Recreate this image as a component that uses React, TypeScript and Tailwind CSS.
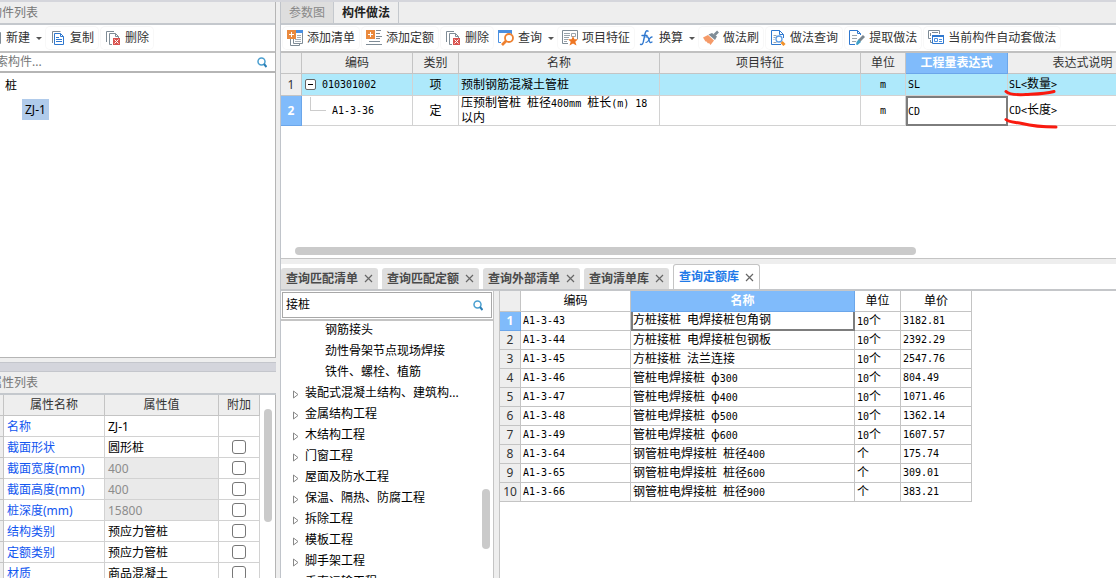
import React, { useState } from 'react';

type IconProps = { className?: string };

const NewIcon = () => (
  <svg width="16" height="16" viewBox="0 0 16 16" fill="none">
    <path d="M1.500 2.500h13v11h-13z" stroke="#7f8c96" />
    <path d="M8 5v6M5 8h6" stroke="#2f78cf" />
  </svg>
);

const AddListIcon = () => (
  <svg width="16" height="16" viewBox="0 0 16 16" fill="none">
    <path d="M3.500 9v6.500h9V14M6.500 9v4.500h9V1" stroke="#7f8c96" />
    <path d="M9 0h7v3H9z" fill="#4a90e2" />
    <path d="M10 5.500h4M10 7.500h4M8 9.500h6M8 11.500h6" stroke="#a5aeb5" />
    <path d="M0 0h9v9H0z" fill="#ea8a3e" />
    <path d="M4.500 2v5M2 4.500h5" stroke="#fff" />
  </svg>
);

const AddQuotaIcon = () => (
  <svg width="16" height="16" viewBox="0 0 16 16" fill="none">
    <path d="M10 .500h5M10 3.500h4M10 6.500h6M10 8.500h4M3 11.500h11M0 14.500h16" stroke="#7f8c96" />
    <path d="M0 0h9v9H0z" fill="#ea8a3e" />
    <path d="M4.500 2v5M2 4.500h5" stroke="#fff" />
  </svg>
);

const CopyIcon = () => (
  <svg width="16" height="16" viewBox="0 0 16 16" fill="none">
    <path d="M2.500 13V1.500h8" stroke="#7f8c96" />
    <path d="M4.500 3.500h6l3 3v8h-9zM10.500 3.500v3h3" stroke="#2f78cf" />
    <path d="M6 7.500h3M6 9.500h6M6 11.500h6" stroke="#2f78cf" />
  </svg>
);

const DeleteIcon = () => (
  <svg width="16" height="16" viewBox="0 0 16 16" fill="none">
    <path d="M1.500 12V1.500H9" stroke="#7f8c96" />
    <path d="M7 14.500H4.500v-11h6l3 3V8M10.500 3.500v3h3" stroke="#7f8c96" />
    <path d="M8 8h7v7H8z" fill="#d9534f" />
    <path d="M9.500 9.500l4 4M13.500 9.500l-4 4" stroke="#fff" />
  </svg>
);

const QueryIcon = () => (
  <svg width="16" height="16" viewBox="0 0 16 16" fill="none">
    <path d="M.500 2v10.500H3M13.500 2v2" stroke="#4a90e2" />
    <path d="M0 0h14v3H0z" fill="#4a8fe0" />
    <circle cx="11" cy="8" r="4" stroke="#ee8130" strokeWidth="1.800" />
    <path d="M8 11L4 15" stroke="#ee8130" strokeWidth="2.600" />
  </svg>
);

const FeatureIcon = () => (
  <svg width="16" height="16" viewBox="0 0 16 16" fill="none">
    <path d="M6 13.500H.500v-13h15V9" stroke="#7f8c96" />
    <path d="M2 3.500h6M2 5.500h6M2 7.500h5M2 9.500h4M2 11.500h3M9.500 3.500h4v3h-4z" stroke="#9aa4ac" />
    <path d="M11 6l1.400 3.200 3.600.1-2.700 2.500 1.200 3.700-3.500-1.900-3.500 1.900 1.200-3.700L6 9.300l3.600-.1z" fill="#ee7623" />
  </svg>
);

const FxIcon = () => (
  <svg width="16" height="16" viewBox="0 0 16 16" fill="none" stroke="#2f78cf" strokeLinecap="round">
    <path d="M9 1.200C7.500.200 6.500 1.200 6 4L4.500 11c-.5 3-1.500 4-3 3.300M3 5.500h5" strokeWidth="1.400" />
    <path d="M7 7c2-.8 2.300.5 3 3s1.200 3.200 3 2M13 7c-2-.2-2.500 2-3.500 3.500s-1.500 2-2.500 1.800" strokeWidth="1.300" />
  </svg>
);

const BrushIcon = () => (
  <svg width="16" height="16" viewBox="0 0 16 16" fill="none">
    <path d="M11.500 5L15 1.500" stroke="#7f8c96" strokeWidth="2.600" />
    <path d="M5.500 4.500l6.500 5.500 2-3.500L9 3z" fill="#7f8c96" />
    <path d="M0 7.500L5 5l6 5.500L7.500 15 6 13l-1 .500-1.500-2-1 0z" fill="#f59a68" />
  </svg>
);

const FileSearchIcon = () => (
  <svg width="16" height="16" viewBox="0 0 16 16" fill="none">
    <path d="M11 14.500H1.500V.500h8l4 4V8M9.500.500v4h4" stroke="#2f78cf" />
    <path d="M3.500 5.500h3M3.500 7.500h2M3.500 9.500h1M3.500 12.500h3" stroke="#9aa4ac" />
    <circle cx="9" cy="9" r="3" stroke="#5b9be3" strokeWidth="1.300" />
    <path d="M11.500 12l3 3" stroke="#f0912b" strokeWidth="3" />
  </svg>
);

const ExtractIcon = () => (
  <svg width="16" height="16" viewBox="0 0 16 16" fill="none">
    <path d="M6 14.500H.500v-14h8l3 3V5M8.500.500v3h3" stroke="#2f78cf" />
    <path d="M3 5.500h5M3 8.500h5M3 11.500h4" stroke="#9aa4ac" />
    <path d="M15 6L10 11" stroke="#7b868e" strokeWidth="3" />
    <path d="M9.500 9.500l2.500 2.500-3.500 3-1.500-.5.500-2.500z" fill="#3fa0c8" />
  </svg>
);

const AutoIcon = () => (
  <svg width="16" height="16" viewBox="0 0 16 16" fill="none">
    <path d="M3 8.500H.500v-8h11V4M2.500 3v3M4 2.500h6M2.500 10v2.500H4" stroke="#7f8c96" />
    <path d="M4.500 5.500h11v8h-11z" stroke="#2f78cf" />
    <path d="M4 5h12v2H4z" fill="#2f78cf" />
    <path d="M6.500 8.500h3v3h-3zM11 9.500h3M11 11.500h3" stroke="#4a90e2" />
  </svg>
);

const SearchIcon = ({ className }: IconProps) => (
  <svg className={className} width="10" height="11" viewBox="0 0 10 11" fill="none">
    <circle cx="4.500" cy="4.500" r="3.500" stroke="#4a9fd0" strokeWidth="1.500" />
    <path d="M7 7l2.500 3" stroke="#2b7fb5" strokeWidth="2" />
  </svg>
);

const CaretIcon = () => (
  <svg width="9" height="5" viewBox="0 0 9 5">
    <path d="M2 1h6L5 4z" fill="#555" />
  </svg>
);

const CloseIcon = () => (
  <svg width="9" height="9" viewBox="0 0 9 9" stroke="#666" strokeWidth="1.200">
    <path d="M1 1l7 7M8 1L1 8" />
  </svg>
);

// Grid text: Latin runs are set in a half-width mono face beside full-width glyphs
const Mono: React.FC<{ text: string }> = ({ text }) => (
  <>
    {text.split(/([\x20-\x7e]+)/).map((part, i) =>
      i % 2 ? (
        <span key={i} className="font-['DejaVu_Sans_Mono',monospace] text-[10px] whitespace-pre-wrap">{part}</span>
      ) : (
        part
      )
    )}
  </>
);

const ToolButton: React.FC<{ icon: React.ReactNode; label: string; menu?: boolean }> = ({ icon, label, menu }) => (
  <button
    type="button"
    className={`flex h-[22px] shrink-0 items-center gap-1 rounded-sm whitespace-nowrap text-[#333] hover:bg-gray-100 ${
      menu ? 'pl-0.5' : 'px-1 ring-1 ring-[#f8f8f8]'
    }`}
  >
    <span className="w-4 shrink-0">{icon}</span>
    {label}
    {menu && <CaretIcon />}
  </button>
);

const properties = [
  { name: '名称', value: 'ZJ-1', noCheck: true },
  { name: '截面形状', value: '圆形桩' },
  { name: '截面宽度(mm)', value: '400', locked: true },
  { name: '截面高度(mm)', value: '400', locked: true },
  { name: '桩深度(mm)', value: '15800', locked: true },
  { name: '结构类别', value: '预应力管桩' },
  { name: '定额类别', value: '预应力管桩' },
  { name: '材质', value: '商品混凝土' },
];

const queryTabs = ['查询匹配清单', '查询匹配定额', '查询外部清单', '查询清单库', '查询定额库'];

const chapters = [
  { label: '钢筋接头', leaf: true },
  { label: '劲性骨架节点现场焊接', leaf: true },
  { label: '铁件、螺栓、植筋', leaf: true },
  { label: '装配式混凝土结构、建筑构...' },
  { label: '金属结构工程' },
  { label: '木结构工程' },
  { label: '门窗工程' },
  { label: '屋面及防水工程' },
  { label: '保温、隔热、防腐工程' },
  { label: '拆除工程' },
  { label: '模板工程' },
  { label: '脚手架工程' },
  { label: '垂直运输工程' },
];

const quotas = [
  ['A1-3-43', '方桩接桩 电焊接桩包角钢', '10个', '3182.81'],
  ['A1-3-44', '方桩接桩 电焊接桩包钢板', '10个', '2392.29'],
  ['A1-3-45', '方桩接桩 法兰连接', '10个', '2547.76'],
  ['A1-3-46', '管桩电焊接桩 φ300', '10个', '804.49'],
  ['A1-3-47', '管桩电焊接桩 φ400', '10个', '1071.46'],
  ['A1-3-48', '管桩电焊接桩 φ500', '10个', '1362.14'],
  ['A1-3-49', '管桩电焊接桩 φ600', '10个', '1607.57'],
  ['A1-3-64', '钢管桩电焊接桩 桩径400', '个', '175.74'],
  ['A1-3-65', '钢管桩电焊接桩 桩径600', '个', '309.01'],
  ['A1-3-66', '钢管桩电焊接桩 桩径900', '个', '383.21'],
];

const PanelTitle: React.FC<{ children: React.ReactNode }> = ({ children }) => (
  <h2 className="flex h-[23px] shrink-0 items-center border-b-2 border-[#c4c8cd] bg-[#eee] text-[#777]">
    <span className="-ml-2.5 whitespace-nowrap">{children}</span>
  </h2>
);

const ComponentPanel = () => (
  <section className="flex h-[356px] shrink-0 flex-col border-r border-b border-[#b5b5b5] bg-white">
    <PanelTitle>构件列表</PanelTitle>
    <div className="flex h-7 shrink-0 items-center overflow-hidden border-b-2 border-[#c0c0c0]">
      <div className="-ml-4 flex gap-[3px]">
        <ToolButton icon={<NewIcon />} label="新建" menu />
        <ToolButton icon={<CopyIcon />} label="复制" />
        <ToolButton icon={<DeleteIcon />} label="删除" />
      </div>
    </div>
    <div className="flex h-5 shrink-0 items-center overflow-hidden border-b-2 border-[#b5b5b5] pr-2">
      <input
        aria-label="搜索构件"
        placeholder="搜索构件..."
        className="-ml-4 min-w-0 flex-1 outline-none placeholder:text-[#777]"
      />
      <SearchIcon />
    </div>
    <ul className="text-black">
      <li className="pt-0.5 pl-[5px] leading-[22px]">桩</li>
      <li className="pt-0.5 pl-[22px]">
        <button type="button" className="h-[21px] bg-[#b0cbeb] px-[3px]">ZJ-1</button>
      </li>
    </ul>
  </section>
);

const PropertyPanel = () => (
  <section className="flex min-h-0 flex-1 flex-col">
    <PanelTitle>属性列表</PanelTitle>
    <div className="flex min-h-0 flex-1 overflow-hidden border-r border-[#b5b5b5] bg-white">
      <table className="w-[260px] shrink-0 table-fixed border-separate border-spacing-0 self-start">
        <colgroup>
          <col className="w-1" />
          <col className="w-[101px]" />
          <col className="w-[114px]" />
          <col className="w-[41px]" />
        </colgroup>
        <thead>
          <tr className="h-[21px] bg-[#eee] text-[#333]">
            <td className="border-r border-b border-[#c4c4c4]" />
            <th className="border-r border-b border-[#c4c4c4] font-normal">属性名称</th>
            <th className="border-r border-b border-[#c4c4c4] font-normal">属性值</th>
            <th className="border-r border-b border-[#c4c4c4] font-normal">附加</th>
          </tr>
        </thead>
        <tbody>
          {properties.map((p) => (
            <tr key={p.name} className="h-[21px]">
              <td className="border-r border-b border-[#c4c4c4] bg-[#eee]" />
              <td className="border-r border-b border-[#d2d2d2] pt-px pl-[3px] whitespace-nowrap text-[#1156f0]">{p.name}</td>
              <td
                className={`border-r border-b border-[#d2d2d2] pt-px pl-[3px] whitespace-nowrap ${
                  p.locked ? 'bg-[#eaeaea] text-[#8c8c8c]' : 'text-black'
                }`}
              >
                {p.value}
              </td>
              <td className="border-r border-b border-[#d2d2d2]">
                {!p.noCheck && (
                  <input
                    type="checkbox"
                    aria-label={`附加 ${p.name}`}
                    className="mx-auto block size-3.5 appearance-none rounded-[3px] border border-[#777] bg-white checked:bg-[#80bbfb]"
                  />
                )}
              </td>
            </tr>
          ))}
        </tbody>
      </table>
      <div className="flex flex-1 justify-center pt-3.5">
        <div className="h-[113px] w-2 rounded-full bg-[#cacaca]" />
      </div>
    </div>
  </section>
);

const head = 'border-r border-b border-[#c4c4c4] font-normal';
const cell = 'border-r border-b border-[#d2d2d2]';

const MethodTable = () => (
  <div className="min-h-0 flex-1 overflow-hidden">
    <table className="w-[877px] table-fixed border-separate border-spacing-0 leading-[14px] text-black">
      <colgroup>
        <col className="w-[21px]" />
        <col className="w-[111px]" />
        <col className="w-[46px]" />
        <col className="w-[201px]" />
        <col className="w-[201px]" />
        <col className="w-[45px]" />
        <col className="w-[102px]" />
        <col className="w-[150px]" />
      </colgroup>
      <thead>
        <tr className="h-[21px] bg-[#eee] text-[#333]">
          <td className={head} />
          <th className={head}>编码</th>
          <th className={head}>类别</th>
          <th className={head}>名称</th>
          <th className={head}>项目特征</th>
          <th className={head}>单位</th>
          <th className="border-r border-b border-[#6ba6ea] bg-[#80bbfb] font-bold text-white">工程量表达式</th>
          <th className={head}>表达式说明</th>
        </tr>
      </thead>
      <tbody>
        <tr className="h-[22px] bg-[#aee9fb]">
          <th className="border-r border-b border-[#c4c4c4] bg-[#eee] font-normal text-[#333]">1</th>
          <td className={cell}>
            <div className="flex items-center gap-1.5 pl-[3px]">
              <button
                type="button"
                aria-label="收起"
                className="flex size-[11px] items-center justify-center rounded-xs border border-[#666] bg-white"
              >
                <span className="h-px w-[5px] bg-black" />
              </button>
              <Mono text="010301002" />
            </div>
          </td>
          <td className={`${cell} text-center`}>项</td>
          <td className={`${cell} pl-0.5`}>预制钢筋混凝土管桩</td>
          <td className={cell} />
          <td className={`${cell} text-center`}><Mono text="m" /></td>
          <td className={`${cell} pl-0.5`}><Mono text="SL" /></td>
          <td className={`${cell} relative pl-px`}>
            <Mono text="SL<数量>" />
            <svg className="absolute top-4 -left-1" width="56" height="7" fill="none" stroke="#f91a0f" strokeWidth="3" strokeLinecap="round">
              <path d="M2 1.500C5 4.500 13 5 22 4.500S40 4 50 1.500" />
            </svg>
          </td>
        </tr>
        <tr className="h-[29px]">
          <th className="border-r border-b border-[#6ba6ea] bg-[#80bbfb] font-bold text-white">2</th>
          <td className={cell}>
            <div className="flex h-7 pl-2">
              <span className="h-3.5 w-4 border-b border-l border-[#ccc]" />
              <span className="self-center pl-1.5"><Mono text="A1-3-36" /></span>
            </div>
          </td>
          <td className={`${cell} text-center`}>定</td>
          <td className={`${cell} pr-1 pl-0.5`}><Mono text="压预制管桩 桩径400mm 桩长(m) 18以内" /></td>
          <td className={cell} />
          <td className={`${cell} text-center`}><Mono text="m" /></td>
          <td className="border-2 border-[#7d7d7d]"><Mono text="CD" /></td>
          <td className={`${cell} relative pl-px`}>
            <Mono text="CD<长度>" />
            <svg className="absolute top-[21px] -left-1" width="56" height="12" fill="none" stroke="#f91a0f" strokeWidth="3" strokeLinecap="round">
              <path d="M2 2.500C5 5.500 12 5 18 6.500S34 10 52 10" />
            </svg>
          </td>
        </tr>
      </tbody>
    </table>
  </div>
);

const QuotaTable: React.FC<{ selected: number; onSelect: (i: number) => void }> = ({ selected, onSelect }) => (
  <div className="min-w-0 flex-1 overflow-hidden border-l border-[#c4c4c4] bg-white">
    <table className="w-[472px] table-fixed border-separate border-spacing-0 leading-[14px] text-black">
      <colgroup>
        <col className="w-[21px]" />
        <col className="w-[110px]" />
        <col className="w-[224px]" />
        <col className="w-[46px]" />
        <col className="w-[71px]" />
      </colgroup>
      <thead>
        <tr className="h-[21px]">
          <td className={`${head} bg-[#eee]`} />
          <th className={head}>编码</th>
          <th className="border-r border-b border-[#6ba6ea] bg-[#80bbfb] font-bold text-white">名称</th>
          <th className={head}>单位</th>
          <th className={head}>单价</th>
        </tr>
      </thead>
      <tbody>
        {quotas.map(([code, name, unit, price], i) => (
          <tr key={code} className="h-[19px]" onClick={() => onSelect(i)}>
            <th
              className={
                i === selected
                  ? 'border-r border-b border-[#6ba6ea] bg-[#80bbfb] font-bold text-white'
                  : 'border-r border-b border-[#c4c4c4] bg-[#eee] font-normal text-[#333]'
              }
            >
              {i + 1}
            </th>
            <td className="border-r border-b border-[#c4c4c4] pb-0.5 pl-0.5"><Mono text={code} /></td>
            <td
              className={
                i === selected
                  ? 'border-x-2 border-b-2 border-[#7d7d7d]'
                  : 'border-r border-b border-[#c4c4c4] pl-0.5'
              }
            >
              <Mono text={name} />
            </td>
            <td className="border-r border-b border-[#c4c4c4] pl-0.5"><Mono text={unit} /></td>
            <td className="border-r border-b border-[#c4c4c4] pb-0.5 pl-0.5"><Mono text={price} /></td>
          </tr>
        ))}
      </tbody>
    </table>
  </div>
);

const App: React.FC = () => {
  const [activeTab, setActiveTab] = useState(4);
  const [selected, setSelected] = useState(0);
  const [keyword, setKeyword] = useState('接桩');

  return (
    <div className="flex h-screen overflow-hidden border-t-2 border-[#d5d6dc] bg-[#eee] font-['Noto_Sans','Noto_Sans_CJK_SC',sans-serif] text-xs leading-4">
      <aside className="flex w-[276px] shrink-0 flex-col">
        <ComponentPanel />
        <div className="mt-1 h-2.5 shrink-0 border-y border-[#c4c6cc] bg-[#d4d5dc]" />
        <PropertyPanel />
      </aside>

      <main className="ml-1 flex min-w-0 flex-1 flex-col border-l border-[#c0c4ca]">
        <div className="flex h-[23px] shrink-0 border-b-2 border-[#c4c8cd]">
          <button type="button" className="w-[53px] border-r border-[#c4c8cd] bg-[#dedede] text-[#888]">参数图</button>
          <button type="button" className="w-[65px] border-r border-[#c4c8cd] font-bold text-[#222]">构件做法</button>
        </div>

        <section className="flex h-[234px] shrink-0 flex-col border-b border-[#c4c4c4] bg-white">
          <div className="flex h-7 shrink-0 items-center gap-[3px] overflow-hidden border-b-2 border-[#c0c0c0] pl-0.5">
            <ToolButton icon={<AddListIcon />} label="添加清单" />
            <ToolButton icon={<AddQuotaIcon />} label="添加定额" />
            <ToolButton icon={<DeleteIcon />} label="删除" />
            <ToolButton icon={<QueryIcon />} label="查询" menu />
            <ToolButton icon={<FeatureIcon />} label="项目特征" />
            <ToolButton icon={<FxIcon />} label="换算" menu />
            <ToolButton icon={<BrushIcon />} label="做法刷" />
            <ToolButton icon={<FileSearchIcon />} label="做法查询" />
            <ToolButton icon={<ExtractIcon />} label="提取做法" />
            <ToolButton icon={<AutoIcon />} label="当前构件自动套做法" />
          </div>
          <MethodTable />
          <div className="shrink-0 pb-[3px] pl-3.5">
            <div className="h-2 w-[621px] rounded-full bg-[#cacaca]" />
          </div>
        </section>

        <section className="mt-[5px] flex min-h-0 flex-1 flex-col">
          <div className="flex h-[27px] shrink-0 items-end gap-1 border-b-2 border-[#c4c6c9] bg-white">
            {queryTabs.map((tab, i) => (
              <div
                key={tab}
                className={`flex items-center gap-1.5 rounded-t-[3px] px-[5px] font-bold ${
                  i === activeTab
                    ? 'h-[25px] border border-b-0 border-[#c4c4c4] bg-white text-[#1f7ae8]'
                    : 'h-[21px] bg-[#dedede] text-[#4a4a4a]'
                }`}
              >
                <button type="button" className="whitespace-nowrap" onClick={() => setActiveTab(i)}>{tab}</button>
                <button type="button" aria-label={`关闭${tab}`}><CloseIcon /></button>
              </div>
            ))}
          </div>

          <div className="flex min-h-0 flex-1">
            <div className="mr-[5px] flex w-[213px] shrink-0 flex-col border-r border-[#c4c4c4] bg-white">
              <div className="border-b-2 border-[#c4c4c4] p-px">
                <div className="flex h-[26px] items-center border border-[#a8a8a8] pr-2 pl-[3px]">
                  <input
                    aria-label="查询定额"
                    value={keyword}
                    onChange={(e) => setKeyword(e.target.value)}
                    className="min-w-0 flex-1 text-black outline-none"
                  />
                  <SearchIcon />
                </div>
              </div>
              <div className="flex min-h-0 flex-1">
                <ul className="min-w-0 flex-1 overflow-hidden text-black">
                  {chapters.map((c) => (
                    <li
                      key={c.label}
                      className={`flex h-[21px] items-center gap-1.5 pb-[3px] whitespace-nowrap ${c.leaf ? 'pl-11' : 'pl-[11px]'}`}
                    >
                      {!c.leaf && (
                        <svg className="mt-[3px] shrink-0" width="7" height="9" fill="none" stroke="#888">
                          <path d="M1.500 1v7l4.500-3.500z" />
                        </svg>
                      )}
                      {c.label}
                    </li>
                  ))}
                </ul>
                <div className="flex w-[11px] shrink-0 pt-[168px]">
                  <div className="h-[60px] w-2 rounded-full bg-[#cacaca]" />
                </div>
              </div>
            </div>
            <QuotaTable selected={selected} onSelect={setSelected} />
          </div>
        </section>
      </main>
    </div>
  );
};

export default App;
